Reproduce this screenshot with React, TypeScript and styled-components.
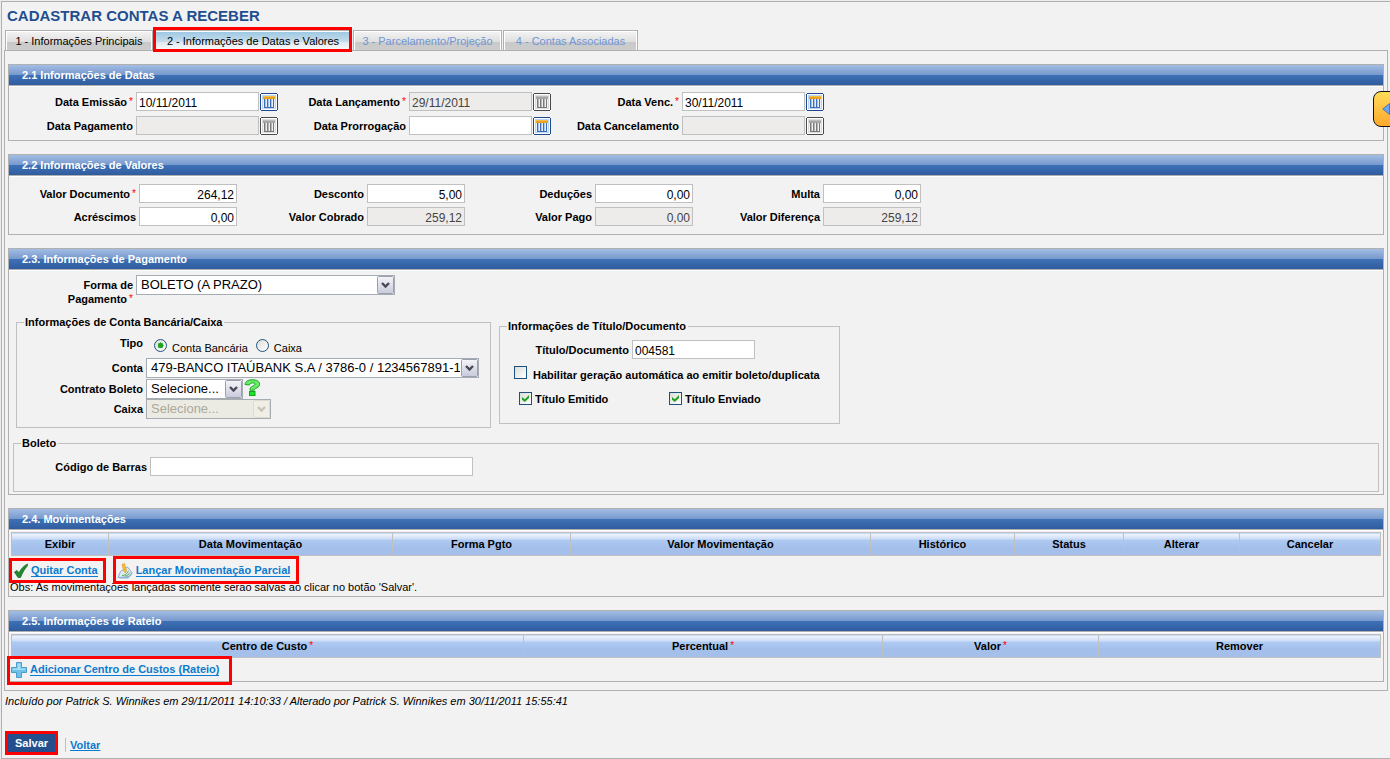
import React from "react";
import styled, { createGlobalStyle, css } from "styled-components";

const GlobalStyle = createGlobalStyle`
  *, *::before, *::after { box-sizing: border-box; }
  body {
    margin: 0;
    background: #ececec;
    color: #000;
    font: 11px/14px "Liberation Sans", Arial, sans-serif;
  }
  button, input, select { font-family: inherit; color: inherit; margin: 0; }
`;

const Frame = styled.div`
  position: relative;
  overflow: hidden;
  margin: 1px 0 0 1px;
  padding: 0 2px 3px;
  background: #f2f2f2;
  border: 1px solid #b0b0b0;
  border-right: 0;
`;

const Title = styled.h1`
  margin: 0;
  padding-left: 3px;
  font-size: 15px;
  line-height: 28px;
  font-weight: bold;
  color: #1f4e8f;
`;

const Tabs = styled.nav`
  display: flex;
  gap: 1px;
  padding-left: 1px;
`;

const Tab = styled.button<{ $w: number; $active?: boolean }>`
  position: relative;
  min-width: ${(p) => p.$w}px;
  height: 20px;
  padding: 1px 5px 0;
  border: 1px solid #b0b0b0;
  border-bottom: 0;
  box-shadow: inset 1px 1px #fff, inset -1px 0 #fff;
  background: linear-gradient(#f4f4f4, #dedede 60%, #c9c9c9 60%, #cdcdcd);
  font-size: 11px;
  line-height: 14px;
  white-space: nowrap;

  &:disabled { color: #6f96d6; }

  ${(p) =>
    p.$active &&
    css`
      background: linear-gradient(#9ac6e3, #c9dfec 60%, #dfe9ef 60%, #fafafa);
      &::after {
        content: "";
        position: absolute;
        z-index: 1;
        inset: -4px -1px -2px -2px;
        border: 3px solid #f00;
      }
    `}
`;

const Panel = styled.main`
  display: flex;
  flex-direction: column;
  gap: 13px;
  padding: 13px 3px 8px;
  border: 1px solid #b0b0b0;
`;

const SectionBox = styled.section`
  border: 1px solid #b0b0b0;
`;

const SectionTitle = styled.h2`
  margin: 0 0 1px;
  padding-left: 13px;
  font-size: 11px;
  line-height: 20px;
  color: #fff;
  border-bottom: 1px solid #b0b0b0;
  box-shadow: 0 1px #fff;
  background: linear-gradient(#a3bde4, #7698cd 50%, #3f71b6 50%, #2f5c9f);
`;

const Fields = styled.div<{ $top: number; $bottom: number; $gap: number }>`
  display: flex;
  flex-direction: column;
  gap: ${(p) => p.$gap}px;
  padding: ${(p) => p.$top}px 0 ${(p) => p.$bottom}px;
`;

const FieldRow = styled.div<{ $cell: number }>`
  display: grid;
  grid-template-columns: repeat(auto-fit, ${(p) => p.$cell}px);
`;

const Field = styled.div<{ $label: number; $top?: boolean }>`
  display: flex;
  align-items: ${(p) => (p.$top ? "flex-start" : "center")};
  > label:first-child, > span:first-child {
    flex: none;
    width: ${(p) => p.$label}px;
    margin-right: 3px;
    text-align: right;
    font-weight: bold;
  }
`;

const Star = styled.sup`
  margin-left: 2px;
  font-size: 10px;
  line-height: 8px;
  font-weight: normal;
  color: #f00;
  vertical-align: 1px;
`;

const TextInput = styled.input<{ $w: number; $right?: boolean }>`
  width: ${(p) => p.$w}px;
  height: 19px;
  padding: 3px 2px 0;
  border: 1px solid #c0c0c0;
  border-radius: 0;
  background: #fff;
  font-size: 12px;
  line-height: 14px;
  text-align: ${(p) => (p.$right ? "right" : "left")};
  &:disabled { background: #eeeceb; color: #444; }
`;

const IconButton = styled.button`
  display: block;
  flex: none;
  margin-left: 1px;
  padding: 0;
  border: 0;
  background: none;
  line-height: 0;
  svg { display: block; }
`;

const SelectWrap = styled.div<{ $w: number }>`
  position: relative;
  width: ${(p) => p.$w}px;
  height: 20px;
  select {
    appearance: none;
    width: 100%;
    height: 20px;
    padding: 0 18px 0 4px;
    border: 1px solid #a5acb2;
    border-radius: 0;
    background: #fff;
    font-size: 13px;
    line-height: 18px;
    opacity: 1;
  }
  select:disabled { background: #ebebe4; color: #aca899; }
  svg { position: absolute; right: 1px; top: 1px; pointer-events: none; }
`;

const PayRow = styled.div`
  padding-top: 4px;
  label:first-child { padding-top: 3px; }
`;

const Groups = styled.div`
  display: flex;
  align-items: flex-start;
  gap: 8px;
  margin: 9px 0 8px 7px;
`;

const Group = styled.fieldset<{ $w?: number; $bottom: number }>`
  min-width: 0;
  width: ${(p) => (p.$w ? p.$w + "px" : "auto")};
  margin: 0;
  padding: 7px 0 ${(p) => p.$bottom}px;
  border: 1px solid #c0c0c0;
  legend {
    margin-left: 7px;
    padding: 0 2px 0 1px;
    font-weight: bold;
  }
`;

const TitleGroup = styled(Group)`
  margin-top: 4px;
`;

const BoletoGroup = styled(Group)`
  margin: 0 4px 2px;
`;

const AccountFields = styled.div`
  display: flex;
  flex-direction: column;
`;

const TypeRow = styled(Field)`
  height: 22px;
`;

const Radios = styled.div`
  display: flex;
  gap: 8px;
  padding: 3px 0 0 8px;
`;

const RadioLabel = styled.label`
  display: flex;
  gap: 5px;
  span { padding-top: 2px; }
`;

const Radio = styled.input.attrs({ type: "radio" })`
  appearance: none;
  width: 13px;
  height: 13px;
  border: 1px solid #1f5280;
  border-radius: 50%;
  background: linear-gradient(135deg, #dcdcd7, #fff);
  &:checked {
    background: radial-gradient(circle, #21a121 0 2px, #5fc85f 3px, transparent 3px),
      linear-gradient(135deg, #dcdcd7, #fff);
  }
`;

const SpacedField = styled(Field)`
  margin-bottom: 1px;
`;

const Checks = styled.div<{ $indent: number; $top: number }>`
  display: grid;
  grid-template-columns: repeat(auto-fit, 150px);
  padding: ${(p) => p.$top}px 0 0 ${(p) => p.$indent}px;
`;

const CheckLabel = styled.label<{ $gap: number; $drop: number }>`
  display: flex;
  gap: ${(p) => p.$gap}px;
  font-weight: bold;
  white-space: nowrap;
  span { padding-top: ${(p) => p.$drop}px; }
`;

const Checkbox = styled.input.attrs({ type: "checkbox" })`
  appearance: none;
  position: relative;
  flex: none;
  width: 13px;
  height: 13px;
  border: 1px solid #1c5180;
  background: linear-gradient(135deg, #dcdcd7, #fff);
  &:checked::after {
    content: "";
    position: absolute;
    inset: 2px;
    background: #21a121;
    clip-path: polygon(0 28%, 40% 62%, 100% 0, 100% 42%, 40% 100%, 0 68%);
  }
`;

const Grid = styled.table`
  width: calc(100% - 4px);
  margin: 2px 2px 0;
  border-collapse: collapse;
  table-layout: fixed;
  th {
    height: 23px;
    padding: 0;
    border: 1px solid #c0c0c0;
    background: linear-gradient(#f2f6fd, #c9dbf6 6px, #aecbf4 6px, #a4c0ea 14px, #a4c0ea);
  }
`;

const Actions = styled.div<{ $indent: number; $top: number }>`
  display: flex;
  align-items: center;
  gap: 19px;
  height: 24px;
  padding: ${(p) => p.$top}px 0 0 ${(p) => p.$indent}px;
`;

const RateioActions = styled(Actions)`
  height: 23px;
`;

const ActionLink = styled.a<{ $frame: string }>`
  position: relative;
  display: flex;
  align-items: center;
  gap: 3px;
  height: 16px;
  font-weight: bold;
  color: #0a7bd0;
  text-decoration: none;
  white-space: nowrap;
  span { border-bottom: 1px solid #0a7bd0; line-height: 12px; }
  &::after {
    content: "";
    position: absolute;
    inset: ${(p) => p.$frame};
    border: 3px solid #f00;
  }
`;

const Note = styled.p`
  margin: 0;
  padding: 0 1px 2px;
`;

const Audit = styled.p`
  margin: 3px 1px 23px;
  font-style: italic;
`;

const Footer = styled.footer`
  display: flex;
  align-items: center;
  padding-left: 1px;
`;

const SaveButton = styled.button`
  height: 24px;
  padding: 0 7px;
  border: 3px solid #f00;
  background: #244f8c;
  color: #fff;
  font-size: 11px;
  font-weight: bold;
  line-height: 14px;
`;

const BackLink = styled.a`
  margin: 3px 0 0 7px;
  padding-left: 4px;
  border-left: 1px solid #c0c0c0;
  font-weight: bold;
  color: #0a7bd0;
`;

const SideToggle = styled.button`
  position: absolute;
  top: 89px;
  right: -10px;
  width: 27px;
  height: 36px;
  padding: 0 0 0 8px;
  border: 1px solid #111;
  border-radius: 8px;
  background: linear-gradient(#ffdc58, #ffa82c);
  line-height: 0;
  text-align: left;
`;

const CalendarIcon = ({ off }: { off?: boolean }) => {
  const edge = off ? "#4a4a4a" : "#1c4a8c";
  const bar = off ? "#7a7a7a" : "#3f6db4";
  return (
    <svg width="18" height="18" viewBox="0 0 18 18" shapeRendering="crispEdges">
      <rect x="0" y="1" width="18" height="16" fill={edge} />
      <rect x="1" y="0" width="16" height="18" fill={edge} />
      <rect x="1" y="1" width="16" height="16" fill="#fff" />
      <rect x="2" y="2" width="14" height="14" fill={off ? "#dcdcdc" : "#bcd3f2"} />
      <rect x="3" y="3" width="12" height="3" fill={off ? "#a5a5a5" : "#e8a21c"} />
      <rect x="3" y="3" width="12" height="1" fill={off ? "#bdbdbd" : "#f6bd4a"} />
      <rect x="3" y="6" width="12" height="9" fill={off ? "#f0f0f0" : "#e6effb"} />
      {[4, 7, 10, 13].map((x) => (
        <rect key={x} x={x} y="6" width="1" height="9" fill={bar} />
      ))}
      {[5, 8, 11].map((x) => (
        <rect key={x} x={x} y="6" width="1" height="9" fill={off ? "#b5b5b5" : "#a9c4ea"} />
      ))}
      <rect x="4" y="14" width="10" height="1" fill={bar} />
    </svg>
  );
};

const ArrowButtonIcon = ({ off }: { off?: boolean }) => (
  <svg width="17" height="18" viewBox="0 0 17 18">
    <defs>
      <linearGradient id="arrowFace" x1="0" y1="0" x2="0" y2="1">
        <stop offset="0" stopColor="#f4f4f9" />
        <stop offset="1" stopColor="#c9cadb" />
      </linearGradient>
    </defs>
    <rect x="0.5" y="0.5" width="16" height="17" rx="1" fill={off ? "#f0efe6" : "url(#arrowFace)"} stroke={off ? "#dddccf" : "#9c9fb0"} />
    <path d="M5 7 L8.5 10.5 L12 7" fill="none" stroke={off ? "#c6c4b8" : "#474a56"} strokeWidth="2.4" />
  </svg>
);

const HelpIcon = () => (
  <svg width="17" height="20" viewBox="0 0 17 20">
    <path d="M1 5.5C1.5 2 4.500 .8 8.500 .8C13 .8 15.600 2.500 15.600 5.200C15.600 7.500 13.800 8.600 11.600 9.400C10.600 9.800 10.400 10.300 10.400 11.200H6C6 9 6.600 8 8.800 7C10.300 6.300 11 5.900 11 5C11 4.200 10.100 3.900 8.800 3.900C7.200 3.900 6 4.600 5.300 6Z" fill="#6aea6a" stroke="#14a51e" />
    <rect x="5.500" y="12.500" width="5.500" height="4" fill="#19e62a" stroke="#14a51e" />
  </svg>
);

const CheckIcon = () => (
  <svg width="14" height="16" viewBox="0 0 14 16">
    <path d="M.5 9L3 7.500L5 9.800C7 6 9.500 3 13.400 1L13.600 2.500C11 5.500 8.500 9.500 6.500 14.500H4Z" fill="#1f8a2e" stroke="#14641f" strokeWidth=".7" />
  </svg>
);

const NoteIcon = () => (
  <svg width="16" height="16" viewBox="0 0 16 16">
    <path d="M3.500 8.500L10.500 4L15.200 10L11 14L1 14.500Z" fill="#dcebf5" stroke="#7c9cb8" strokeWidth=".8" />
    <path d="M1 14.500L11 13.200L15.200 9.500V11.200L11 15.400L3 15.600Z" fill="#8db3cf" />
    <path d="M5 12.500C8 12.500 10 11 11.500 8M8 13C10.500 12.500 12 11.500 13 9.500" fill="none" stroke="#5fae5a" />
    <path d="M5 1.500L7.500 .6L9.500 7.500L8.600 9.800L6.800 8.300Z" fill="#f6bf3d" stroke="#d99c22" strokeWidth=".7" />
  </svg>
);

const PlusIcon = () => (
  <svg width="16" height="16" viewBox="0 0 16 16">
    <path d="M5.500 .5H10.500V5.500H15.500V10.500H10.500V15.500H5.500V10.500H.5V5.500H5.500Z" fill="#6cc0ea" stroke="#4a9cc9" />
    <path d="M6.500 1.500H9.500V6.500H14.500V8H1.500V6.500H6.500Z" fill="#a5dcf6" />
  </svg>
);

const LeftArrowIcon = () => (
  <svg width="8" height="12" viewBox="0 0 8 12">
    <path d="M7.500 .5V11.500L.7 6Z" fill="#6ea4ec" stroke="#3569bb" strokeWidth=".8" />
  </svg>
);

type FieldData = { id: string; label: string; value?: string; required?: boolean; off?: boolean };

const dateRows: FieldData[][] = [
  [
    { id: "emissao", label: "Data Emissão", value: "10/11/2011", required: true },
    { id: "lancamento", label: "Data Lançamento", value: "29/11/2011", required: true, off: true },
    { id: "vencimento", label: "Data Venc.", value: "30/11/2011", required: true },
  ],
  [
    { id: "pagamento", label: "Data Pagamento", off: true },
    { id: "prorrogacao", label: "Data Prorrogação" },
    { id: "cancelamento", label: "Data Cancelamento", off: true },
  ],
];

const valueRows: FieldData[][] = [
  [
    { id: "documento", label: "Valor Documento", value: "264,12", required: true },
    { id: "desconto", label: "Desconto", value: "5,00" },
    { id: "deducoes", label: "Deduções", value: "0,00" },
    { id: "multa", label: "Multa", value: "0,00" },
  ],
  [
    { id: "acrescimos", label: "Acréscimos", value: "0,00" },
    { id: "cobrado", label: "Valor Cobrado", value: "259,12", off: true },
    { id: "pago", label: "Valor Pago", value: "0,00", off: true },
    { id: "diferenca", label: "Valor Diferença", value: "259,12", off: true },
  ],
];

const movementColumns: [string, number][] = [
  ["Exibir", 97],
  ["Data Movimentação", 284],
  ["Forma Pgto", 178],
  ["Valor Movimentação", 300],
  ["Histórico", 144],
  ["Status", 109],
  ["Alterar", 116],
  ["Cancelar", 141],
];

const costColumns: [string, number, boolean][] = [
  ["Centro de Custo", 512, true],
  ["Percentual", 359, true],
  ["Valor", 216, true],
  ["Remover", 282, false],
];

const Col = styled.col<{ $share: number }>`
  width: ${(p) => (p.$share / 1369) * 100}%;
`;

const Section = ({ title, children }: { title: string; children: React.ReactNode }) => (
  <SectionBox>
    <SectionTitle>{title}</SectionTitle>
    {children}
  </SectionBox>
);

const Select = ({ id, width, text, off }: { id: string; width: number; text: string; off?: boolean }) => (
  <SelectWrap $w={width}>
    <select id={id} disabled={off}>
      <option>{text}</option>
    </select>
    <ArrowButtonIcon off={off} />
  </SelectWrap>
);

export default function App() {
  return (
    <>
      <GlobalStyle />
      <Frame>
        <Title>CADASTRAR CONTAS A RECEBER</Title>
        <Tabs>
          <Tab $w={148}>1 - Informações Principais</Tab>
          <Tab $w={198} $active>2 - Informações de Datas e Valores</Tab>
          <Tab $w={149} disabled>3 - Parcelamento/Projeção</Tab>
          <Tab $w={135} disabled>4 - Contas Associadas</Tab>
        </Tabs>
        <Panel>
          <Section title="2.1 Informações de Datas">
            <Fields $top={5} $bottom={5} $gap={5}>
              {dateRows.map((row, i) => (
                <FieldRow key={i} $cell={273}>
                  {row.map((f) => (
                    <Field key={f.id} $label={124}>
                      <label htmlFor={f.id}>
                        {f.label}
                        {f.required && <Star>*</Star>}
                      </label>
                      <TextInput id={f.id} $w={123} defaultValue={f.value} disabled={f.off} />
                      <IconButton aria-label={`Calendário: ${f.label}`} disabled={f.off}>
                        <CalendarIcon off={f.off} />
                      </IconButton>
                    </Field>
                  ))}
                </FieldRow>
              ))}
            </Fields>
          </Section>

          <Section title="2.2 Informações de Valores">
            <Fields $top={7} $bottom={8} $gap={4}>
              {valueRows.map((row, i) => (
                <FieldRow key={i} $cell={228}>
                  {row.map((f) => (
                    <Field key={f.id} $label={127}>
                      <label htmlFor={f.id}>
                        {f.label}
                        {f.required && <Star>*</Star>}
                      </label>
                      <TextInput id={f.id} $w={98} $right defaultValue={f.value} disabled={f.off} />
                    </Field>
                  ))}
                </FieldRow>
              ))}
            </Fields>
          </Section>

          <Section title="2.3. Informações de Pagamento">
            <PayRow>
              <Field $label={124} $top>
                <label htmlFor="forma">
                  Forma de
                  <br />
                  Pagamento<Star>*</Star>
                </label>
                <Select id="forma" width={259} text="BOLETO (A PRAZO)" />
              </Field>
            </PayRow>
            <Groups>
              <Group $w={475} $bottom={8}>
                <legend>Informações de Conta Bancária/Caixa</legend>
                <AccountFields>
                  <TypeRow $label={126} $top>
                    <span>Tipo</span>
                    <Radios>
                      <RadioLabel>
                        <Radio name="tipo" defaultChecked />
                        <span>Conta Bancária</span>
                      </RadioLabel>
                      <RadioLabel>
                        <Radio name="tipo" />
                        <span>Caixa</span>
                      </RadioLabel>
                    </Radios>
                  </TypeRow>
                  <SpacedField $label={126}>
                    <label htmlFor="conta">Conta</label>
                    <Select id="conta" width={333} text="479-BANCO ITAÚBANK S.A / 3786-0 / 1234567891-1" />
                  </SpacedField>
                  <Field $label={126}>
                    <label htmlFor="contrato">Contrato Boleto</label>
                    <Select id="contrato" width={97} text="Selecione..." />
                    <IconButton aria-label="Ajuda">
                      <HelpIcon />
                    </IconButton>
                  </Field>
                  <Field $label={126}>
                    <label htmlFor="caixa">Caixa</label>
                    <Select id="caixa" width={125} text="Selecione..." off />
                  </Field>
                </AccountFields>
              </Group>
              <TitleGroup $w={341} $bottom={17}>
                <legend>Informações de Título/Documento</legend>
                <Field $label={129}>
                  <label htmlFor="titulo">Título/Documento</label>
                  <TextInput id="titulo" $w={123} defaultValue="004581" />
                </Field>
                <Checks $indent={14} $top={7}>
                  <CheckLabel $gap={6} $drop={2}>
                    <Checkbox />
                    <span>Habilitar geração automática ao emitir boleto/duplicata</span>
                  </CheckLabel>
                </Checks>
                <Checks $indent={19} $top={10}>
                  <CheckLabel $gap={3} $drop={0}>
                    <Checkbox defaultChecked />
                    <span>Título Emitido</span>
                  </CheckLabel>
                  <CheckLabel $gap={3} $drop={0}>
                    <Checkbox defaultChecked />
                    <span>Título Enviado</span>
                  </CheckLabel>
                </Checks>
              </TitleGroup>
            </Groups>
            <BoletoGroup $bottom={15}>
              <legend>Boleto</legend>
              <Field $label={133}>
                <label htmlFor="barras">Código de Barras</label>
                <TextInput id="barras" $w={323} />
              </Field>
            </BoletoGroup>
          </Section>

          <Section title="2.4. Movimentações">
            <Grid>
              <colgroup>
                {movementColumns.map(([name, share]) => (
                  <Col key={name} $share={share} />
                ))}
              </colgroup>
              <thead>
                <tr>
                  {movementColumns.map(([name]) => (
                    <th key={name}>{name}</th>
                  ))}
                </tr>
              </thead>
            </Grid>
            <Actions $indent={5} $top={5}>
              <ActionLink href="#quitar" $frame="-5px -8px -4px -5px">
                <CheckIcon />
                <span>Quitar Conta</span>
              </ActionLink>
              <ActionLink href="#lancar" $frame="-7px -9px -5px -4px">
                <NoteIcon />
                <span>Lançar Movimentação Parcial</span>
              </ActionLink>
            </Actions>
            <Note>Obs: As movimentações lançadas somente serão salvas ao clicar no botão 'Salvar'.</Note>
          </Section>

          <Section title="2.5. Informações de Rateio">
            <Grid>
              <colgroup>
                {costColumns.map(([name, share]) => (
                  <Col key={name} $share={share} />
                ))}
              </colgroup>
              <thead>
                <tr>
                  {costColumns.map(([name, , required]) => (
                    <th key={name}>
                      {name}
                      {required && <Star>*</Star>}
                    </th>
                  ))}
                </tr>
              </thead>
            </Grid>
            <RateioActions $indent={2} $top={0}>
              <ActionLink href="#rateio" $frame="-6px -13px -7px -4px">
                <PlusIcon />
                <span>Adicionar Centro de Custos (Rateio)</span>
              </ActionLink>
            </RateioActions>
          </Section>
        </Panel>
        <Audit>
          Incluído por Patrick S. Winnikes em 29/11/2011 14:10:33 / Alterado por Patrick S. Winnikes em 30/11/2011 15:55:41
        </Audit>
        <Footer>
          <SaveButton>Salvar</SaveButton>
          <BackLink href="#voltar">Voltar</BackLink>
        </Footer>
        <SideToggle aria-label="Abrir menu lateral">
          <LeftArrowIcon />
        </SideToggle>
      </Frame>
    </>
  );
}
